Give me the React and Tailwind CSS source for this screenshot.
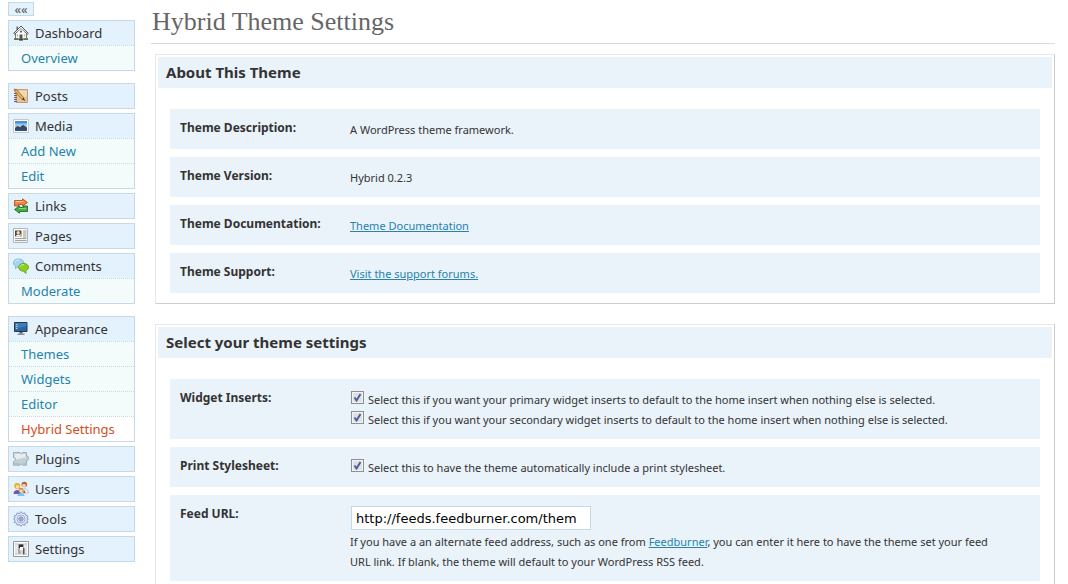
import { useState } from 'react'

function DashboardIcon() {
  return (
    <svg viewBox="0 0 16 16" className="size-4" aria-hidden="true">
      <path d="M2.5 7.500h11v6.500h-11z" fill="#fdfdfd" stroke="#777" />
      <path d="M3.500 1.500h1.500v3l-1.500 1z" fill="#666" />
      <path d="M8 1 15.300 8.300l-.9.900L8 3.800 1.600 9.200l-.9-.9z" fill="#f1f1f1" stroke="#444" strokeWidth=".9" />
      <path d="M8 4 12.500 8h-9z" fill="#fff" />
      <path d="M6.500 9.500h3v5h-3z" fill="#555" />
      <path d="M7.200 5.800h1.600v1.600H7.200z" fill="#333" />
      <path d="M3.800 9.500h1.400v2H3.800zM10.800 9.500h1.400v2h-1.400z" fill="#aaa" />
      <path d="M1 13.300h4.500v1.700H1zM10.500 13.300H15v1.700h-4.500z" fill="#5c7a30" />
      <path d="M6 14.300h4v1.200H6z" fill="#222" />
    </svg>
  )
}

function PostsIcon() {
  return (
    <svg viewBox="0 0 16 16" className="size-4" aria-hidden="true">
      <path d="M3 1.500h11.500v13H3z" fill="#e2c19b" stroke="#c39b74" />
      <path d="M5 2.500h9v6l-4 1z" fill="#f0d7b6" />
      <path d="M1 5.500h3M1 7.500h3M1 9.500h3M1 11.500h3M1 13.500h3" stroke="#5d5260" strokeWidth=".9" />
      <path d="m2 1.800 8 9" stroke="#8a6027" strokeWidth="2.800" />
      <path d="m2.200 2 7.600 8.600" stroke="#f6bb45" strokeWidth="1.700" />
      <path d="M.6 1.600 1.900.5l1.300 1.400L1.900 3z" fill="#d0573f" />
      <path d="m8.900 11.300 1.900-1.600 1.400 3.300z" fill="#333" />
    </svg>
  )
}

function MediaIcon() {
  return (
    <svg viewBox="0 0 16 16" className="size-4" aria-hidden="true">
      <path d="M.5 1.500h15v13H.5z" fill="#fff" stroke="#cbc8c4" />
      <path d="M2 3h12v10H2z" fill="#4a91d6" />
      <path d="M2 5.500h12V10H2z" fill="#9ccbf0" />
      <path d="m2 10 2.500-2L7 9.200l3-2.400L14 9.800V12H2z" fill="#3b4752" />
      <path d="M2 11.300c4-.8 8 .8 12-.3v2H2z" fill="#235594" />
    </svg>
  )
}

function LinksIcon() {
  return (
    <svg viewBox="0 0 16 16" className="size-4" aria-hidden="true">
      <path d="M1.500 8V2.500h8V.8l5 3.700-5 3.700V6.500h-4V8z" fill="#f0873c" stroke="#a34b16" strokeWidth=".8" />
      <path d="M14.500 8v5.500h-8v1.700l-5-3.700 5-3.700v1.700h4V8z" fill="#43ac43" stroke="#15651f" strokeWidth=".8" />
      <path d="M2.500 3.500h7.600" stroke="#ffc08b" />
      <path d="M6 10.600h7" stroke="#93dd7d" />
    </svg>
  )
}

function PagesIcon() {
  return (
    <svg viewBox="0 0 16 16" className="size-4" aria-hidden="true">
      <path d="M.5.5h14v14H.5z" fill="#fcfcfc" stroke="#b5b5b5" />
      <path d="M2 2.500h6.500v6H2z" fill="#454b51" />
      <circle cx="5.200" cy="4.700" r="1.700" fill="#f6d6a0" />
      <path d="M2.600 8.500c.5-2.400 4.600-2.400 5.200 0z" fill="#fff" />
      <path d="M6.800 6h1.700v2.500H6.800z" fill="#edb84e" />
      <path d="M10 3h3.500M10 5h3.500M10 7h3.500M10 9h3.500M2 10.600h11.500M2 12.600h11.500" stroke="#8b8b8b" strokeWidth=".9" />
    </svg>
  )
}

function CommentsIcon() {
  return (
    <svg viewBox="0 0 16 16" className="size-4" aria-hidden="true">
      <path d="M5.600 1C2.600 1 .5 2.600.5 4.800c0 1.500.9 2.700 2.300 3.400L2.400 10.600 5 8.800c3.400.2 5.800-1.600 5.800-4C10.800 2.600 8.600 1 5.600 1z" fill="#a5d4f6" stroke="#6eaad9" strokeWidth=".8" />
      <path d="M2 4.200c.5-1.700 2.200-2.300 4.200-2.200" fill="none" stroke="#e4f4ff" />
      <path d="M10.600 5.400c-2.900 0-5 1.700-5 3.900s2.100 3.900 4.700 3.900l2.900 2.200-.4-2.800c1.700-.7 2.700-1.800 2.700-3.300 0-2.200-2.100-3.900-4.900-3.900z" fill="#8ed01c" stroke="#5a9a12" strokeWidth=".8" />
      <path d="M7 8.800c.5-1.600 2-2.300 4-2.200" fill="none" stroke="#d2f384" />
    </svg>
  )
}

function AppearanceIcon() {
  return (
    <svg viewBox="0 0 16 16" className="size-4" aria-hidden="true">
      <path d="M1.500 1.500h12.500V10.500H1.500z" fill="#2867a3" stroke="#24394f" />
      <path d="M2 2h11.500v3L2 8z" fill="#417eb8" />
      <path d="M3 3.500h1.500M3 5.500h1.500M3 7.500h1.500" stroke="#b9ddf5" strokeWidth=".9" />
      <path d="M6.500 11h3v1.500h-3z" fill="#555b64" />
      <path d="M4.500 12.500h7V14h-7z" fill="#8a8e96" />
    </svg>
  )
}

function PluginsIcon() {
  return (
    <svg viewBox="0 0 16 16" className="size-4" aria-hidden="true">
      <path
        d="M.5 1.500H7c0 1.300 2.500 1.300 2.500 0h4V5c2.700-.8 2.700 5.300 0 4.500v4.700H9.500c0-1.300-2.500-1.300-2.500 0H.5V10.500c2.200.5 2.200-4.500 0-4z"
        fill="#c3ced5"
        stroke="#97a7b0"
        strokeWidth=".9"
      />
      <path d="M1.500 2.700h5.200c1 .8 2.300.8 3.300 0h2.500v3.800L3 8.500c0-1.500-.5-2.500-1.500-2.800z" fill="#e6ecef" />
      <path d="M1.500 12.700h4.800M10.200 12.700h2.300" stroke="#aebbc3" />
    </svg>
  )
}

function UsersIcon() {
  return (
    <svg viewBox="0 0 16 16" className="size-4" aria-hidden="true">
      <circle cx="11.300" cy="3.500" r="2.800" fill="#a5683a" />
      <circle cx="11" cy="4.600" r="1.900" fill="#f5cfa6" />
      <path d="M7.800 12c0-5.800 7.700-5.800 7.700 0z" fill="#e9eef7" stroke="#a5b3c8" strokeWidth=".6" />
      <path d="M11 8.500 12.500 12h-2.300z" fill="#b93a3a" />
      <circle cx="4.200" cy="5" r="3" fill="#e9ac28" />
      <circle cx="4.400" cy="5.700" r="1.800" fill="#fbdcae" />
      <path d="M.5 13c0-5.500 7.500-5.500 7.500 0z" fill="#6f56a6" />
      <circle cx="8" cy="9.200" r="2.400" fill="#d28b34" />
      <circle cx="8" cy="9.900" r="1.600" fill="#fbdcae" />
      <path d="M4.300 15c.4-4 7-4 7.400 0z" fill="#70c3ed" />
    </svg>
  )
}

function ToolsIcon() {
  return (
    <svg viewBox="0 0 16 16" className="size-4" aria-hidden="true">
      <path
        d="M6.500 2.500 8 .6l1.500 1.900 2.300-.6.700 2.200 2.300.9-.9 2 1.500 1-1.500 1.200.9 2.100-2.400.7-.6 2.200-2.400-.6L8 15.400l-1.400-1.800-2.400.6-.6-2.200-2.400-.7.9-2.100L.6 8l1.500-1-.9-2 2.300-.9.700-2.200z"
        fill="#e3e9f7"
        stroke="#7c8fc2"
        strokeWidth=".9"
      />
      <circle cx="8" cy="8" r="4" fill="#f5f7fd" stroke="#95a4d0" strokeWidth=".9" />
      <circle cx="8" cy="8" r="2.200" fill="#c6d0ec" stroke="#6478b2" strokeWidth=".9" />
      <circle cx="8" cy="8" r=".8" fill="#566aa3" />
    </svg>
  )
}

function SettingsIcon() {
  return (
    <svg viewBox="0 0 16 16" className="size-4" aria-hidden="true">
      <path d="M.5.5h15v15H.5z" fill="#e6e6e9" stroke="#97979b" />
      <path d="M1.500 1.500h13v13h-13z" fill="none" stroke="#fbfbfb" />
      <path d="M5 3h6v10H5z" fill="#a9a9ac" />
      <path d="M6 3.500h4V7H6z" fill="#303033" />
      <path d="M7 6h3v3.500H7z" fill="#fdfdfd" />
      <path d="M7.500 9.500H10V13H7.500z" fill="#d4d4d7" />
      <path d="M10 7h1.500v6.500H10z" fill="#55555a" />
      <path d="M2.500 2.500h1v1h-1zM12.500 2.500h1v1h-1zM2.500 12.500h1v1h-1zM12.500 12.500h1v1h-1z" fill="#9c9ca0" />
    </svg>
  )
}

const MENU = [
  [{ label: 'Dashboard', icon: DashboardIcon, items: ['Overview'] }],
  [
    { label: 'Posts', icon: PostsIcon },
    { label: 'Media', icon: MediaIcon, items: ['Add New', 'Edit'] },
    { label: 'Links', icon: LinksIcon },
    { label: 'Pages', icon: PagesIcon },
    { label: 'Comments', icon: CommentsIcon, items: ['Moderate'] },
  ],
  [
    { label: 'Appearance', icon: AppearanceIcon, items: ['Themes', 'Widgets', 'Editor', 'Hybrid Settings'] },
    { label: 'Plugins', icon: PluginsIcon },
    { label: 'Users', icon: UsersIcon },
    { label: 'Tools', icon: ToolsIcon },
    { label: 'Settings', icon: SettingsIcon },
  ],
]

const CURRENT = 'Hybrid Settings'

function MenuBox({ label, icon: Icon, items = [] }) {
  return (
    <li className="border border-[#c6d9e9] bg-[#e4f2fd]">
      <a href="#" className="flex h-6 items-center gap-1.5 pl-1 text-[#333]">
        <Icon />
        <span className="pt-0.5">{label}</span>
      </a>
      {items.map(item => (
        <a
          key={item}
          href="#"
          className={
            item === CURRENT
              ? 'block h-[25px] border-t border-dotted border-[#c6d9e9] bg-white pl-3 leading-6 text-[#d54e21]'
              : 'block h-[25px] border-t border-dotted border-[#c6d9e9] bg-[#f3fbfb] pl-3 leading-6 text-[#2583ad]'
          }
        >
          {item}
        </a>
      ))}
    </li>
  )
}

function Sidebar() {
  return (
    <nav className="w-[127px] shrink-0 pt-0.5 text-[13px]">
      <button
        type="button"
        aria-label="Fold menu"
        className="flex h-3.5 w-[26px] items-center justify-center border border-[#c6d9e9] bg-[#e4f2fd] text-[13px] leading-3 text-[#555]"
      >
        ««
      </button>
      <div className="flex flex-col gap-3 pt-1">
        {MENU.map((group, i) => (
          <ul key={i} className="flex flex-col gap-1">
            {group.map(box => <MenuBox key={box.label} {...box} />)}
          </ul>
        ))}
      </div>
    </nav>
  )
}

function Panel({ title, children }) {
  return (
    <section className="ml-1 border border-t-[#e8e8e8] border-r-[#ccc] border-b-[#ccc] border-l-[#e8e8e8] p-0.5">
      <h3 className="h-[31px] bg-[#eaf2fa] pl-2 text-[15px] leading-[31px] font-bold text-[#333]">{title}</h3>
      <div className="px-3 pt-[13px]">
        <table className="w-full border-separate border-spacing-x-0 border-spacing-y-2">
          <tbody>{children}</tbody>
        </table>
      </div>
    </section>
  )
}

function Row({ label, htmlFor, children }) {
  return (
    <tr className="bg-[#eaf2fa] align-top">
      <th scope="row" className="w-[170px] px-2.5 pt-[9px] text-left text-[12px] leading-5 font-bold whitespace-nowrap text-[#333]">
        {htmlFor ? <label htmlFor={htmlFor}>{label}</label> : label}
      </th>
      <td className="px-2.5 pt-[11px] pb-[9px] text-[11px] leading-5">{children}</td>
    </tr>
  )
}

function Check({ children }) {
  const [on, setOn] = useState(true)
  return (
    <label className="flex items-start gap-1">
      <span className="relative mt-px ml-px size-[13px] shrink-0">
        <input
          type="checkbox"
          checked={on}
          onChange={e => setOn(e.target.checked)}
          className="block size-[13px] appearance-none border border-[#8e8f8f] bg-[#dfe1e6] shadow-[inset_0_0_0_1px_#f4f4f4]"
        />
        {on && (
          <svg viewBox="0 0 13 13" className="pointer-events-none absolute inset-0 size-[13px]" aria-hidden="true">
            <path d="m3.500 6.500 2 3 4-6.500" fill="none" stroke="#4a5f97" strokeWidth="1.900" />
          </svg>
        )}
      </span>
      {children}
    </label>
  )
}

function Link({ children }) {
  return <a href="#" className="text-[#2583ad] underline">{children}</a>
}

export default function App() {
  return (
    <div className="flex h-screen gap-4 overflow-hidden bg-white pr-[13px] pl-2 font-['Noto_Sans',sans-serif] text-[#333]">
      <Sidebar />
      <main className="min-w-0 flex-1">
        <h2 className="mb-2.5 h-11 border-b border-[#dadada] pl-px font-['Liberation_Serif',serif] text-[26px] leading-[44px] text-[#666]">
          Hybrid Theme Settings
        </h2>
        <div className="flex flex-col gap-5">
          <Panel title="About This Theme">
            <Row label="Theme Description:">A WordPress theme framework.</Row>
            <Row label="Theme Version:">Hybrid 0.2.3</Row>
            <Row label="Theme Documentation:"><Link>Theme Documentation</Link></Row>
            <Row label="Theme Support:"><Link>Visit the support forums.</Link></Row>
          </Panel>
          <Panel title="Select your theme settings">
            <Row label="Widget Inserts:">
              <Check>Select this if you want your primary widget inserts to default to the home insert when nothing else is selected.</Check>
              <Check>Select this if you want your secondary widget inserts to default to the home insert when nothing else is selected.</Check>
            </Row>
            <Row label="Print Stylesheet:">
              <Check>Select this to have the theme automatically include a print stylesheet.</Check>
            </Row>
            <Row label="Feed URL:" htmlFor="feed-url">
              <input
                id="feed-url"
                type="text"
                defaultValue="http://feeds.feedburner.com/them"
                className="mb-0.5 ml-px block h-6 w-60 border border-[#c6d9e9] bg-white px-1 font-['DejaVu_Sans',sans-serif] text-[13px] text-black"
              />
              <p className="max-w-[650px]">
                If you have a an alternate feed address, such as one from <Link>Feedburner</Link>, you can enter it here to
                have the theme set your feed URL link. If blank, the theme will default to your WordPress RSS feed.
              </p>
            </Row>
          </Panel>
        </div>
      </main>
    </div>
  )
}
